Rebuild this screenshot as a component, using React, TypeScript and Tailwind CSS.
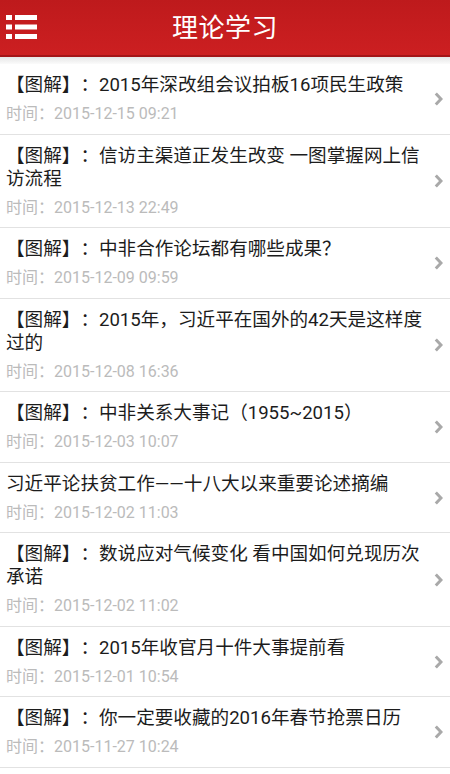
import React from "react";

type Item = { lines: string[]; time: string };

const items: Item[] = [
  { lines: ["【图解】：2015年深改组会议拍板16项民生政策"], time: "2015-12-15 09:21" },
  { lines: ["【图解】：信访主渠道正发生改变 一图掌握网上信", "访流程"], time: "2015-12-13 22:49" },
  { lines: ["【图解】：中非合作论坛都有哪些成果？"], time: "2015-12-09 09:59" },
  { lines: ["【图解】：2015年，习近平在国外的42天是这样度", "过的"], time: "2015-12-08 16:36" },
  { lines: ["【图解】：中非关系大事记（1955~2015）"], time: "2015-12-03 10:07" },
  { lines: ["习近平论扶贫工作——十八大以来重要论述摘编"], time: "2015-12-02 11:03" },
  { lines: ["【图解】：数说应对气候变化 看中国如何兑现历次", "承诺"], time: "2015-12-02 11:02" },
  { lines: ["【图解】：2015年收官月十件大事提前看"], time: "2015-12-01 10:54" },
  { lines: ["【图解】：你一定要收藏的2016年春节抢票日历"], time: "2015-11-27 10:24" },
];

function MenuIcon() {
  return (
    <svg width="31" height="25" viewBox="0 0 31 25" fill="#ffffff">
      <rect x="0" y="0" width="6" height="5" />
      <rect x="9" y="0" width="22" height="5" />
      <rect x="0" y="9.5" width="6" height="5" />
      <rect x="9" y="9.5" width="22" height="5" />
      <rect x="0" y="19" width="6" height="5" />
      <rect x="9" y="19" width="22" height="5" />
    </svg>
  );
}

function Chevron() {
  return (
    <svg width="9" height="14" viewBox="0 0 9 14" fill="none">
      <path d="M1.8 1.5 L7 7 L1.8 12.5" stroke="#a9a9a9" strokeWidth="3" strokeLinecap="butt" strokeLinejoin="miter" />
    </svg>
  );
}

export default function App() {
  return (
    <div
      className="w-[450px] h-[774px] overflow-hidden bg-white [text-spacing-trim:space-all]"
      style={{ fontFamily: 'Roboto, "Noto Sans CJK SC", sans-serif' }}
    >
      <header className="relative h-[57px] flex items-center justify-center bg-gradient-to-b from-[#be1a1c] to-[#cc1f21] border-b-2 border-[#a31417]">
        <div className="absolute left-[6px] top-[15px]">
          <MenuIcon />
        </div>
        <h1 className="text-white text-[26px] leading-none tracking-[0.5px] pt-[1px]">理论学习</h1>
      </header>
      <div className="h-[7px] bg-gradient-to-b from-[#e6e6e6] to-[#fbfbfb]" />
      <ul>
        {items.map((it, i) => (
          <li
            key={i}
            className="flex items-center border-b border-[#e2e2e2] pl-[6px] pr-[7px] pt-[10px] pb-[9.5px]"
          >
            <div className="flex-1 min-w-0">
              <div className="text-[18.6px] leading-[23px] text-[#1c1c1c] whitespace-nowrap">
                {it.lines.map((l, j) => (
                  <div key={j}>{l}</div>
                ))}
              </div>
              <div className="mt-[6px] text-[16px] leading-[21px] text-[#bbbbbb] whitespace-nowrap">
                时间：{it.time}
              </div>
            </div>
            <Chevron />
          </li>
        ))}
      </ul>
    </div>
  );
}
